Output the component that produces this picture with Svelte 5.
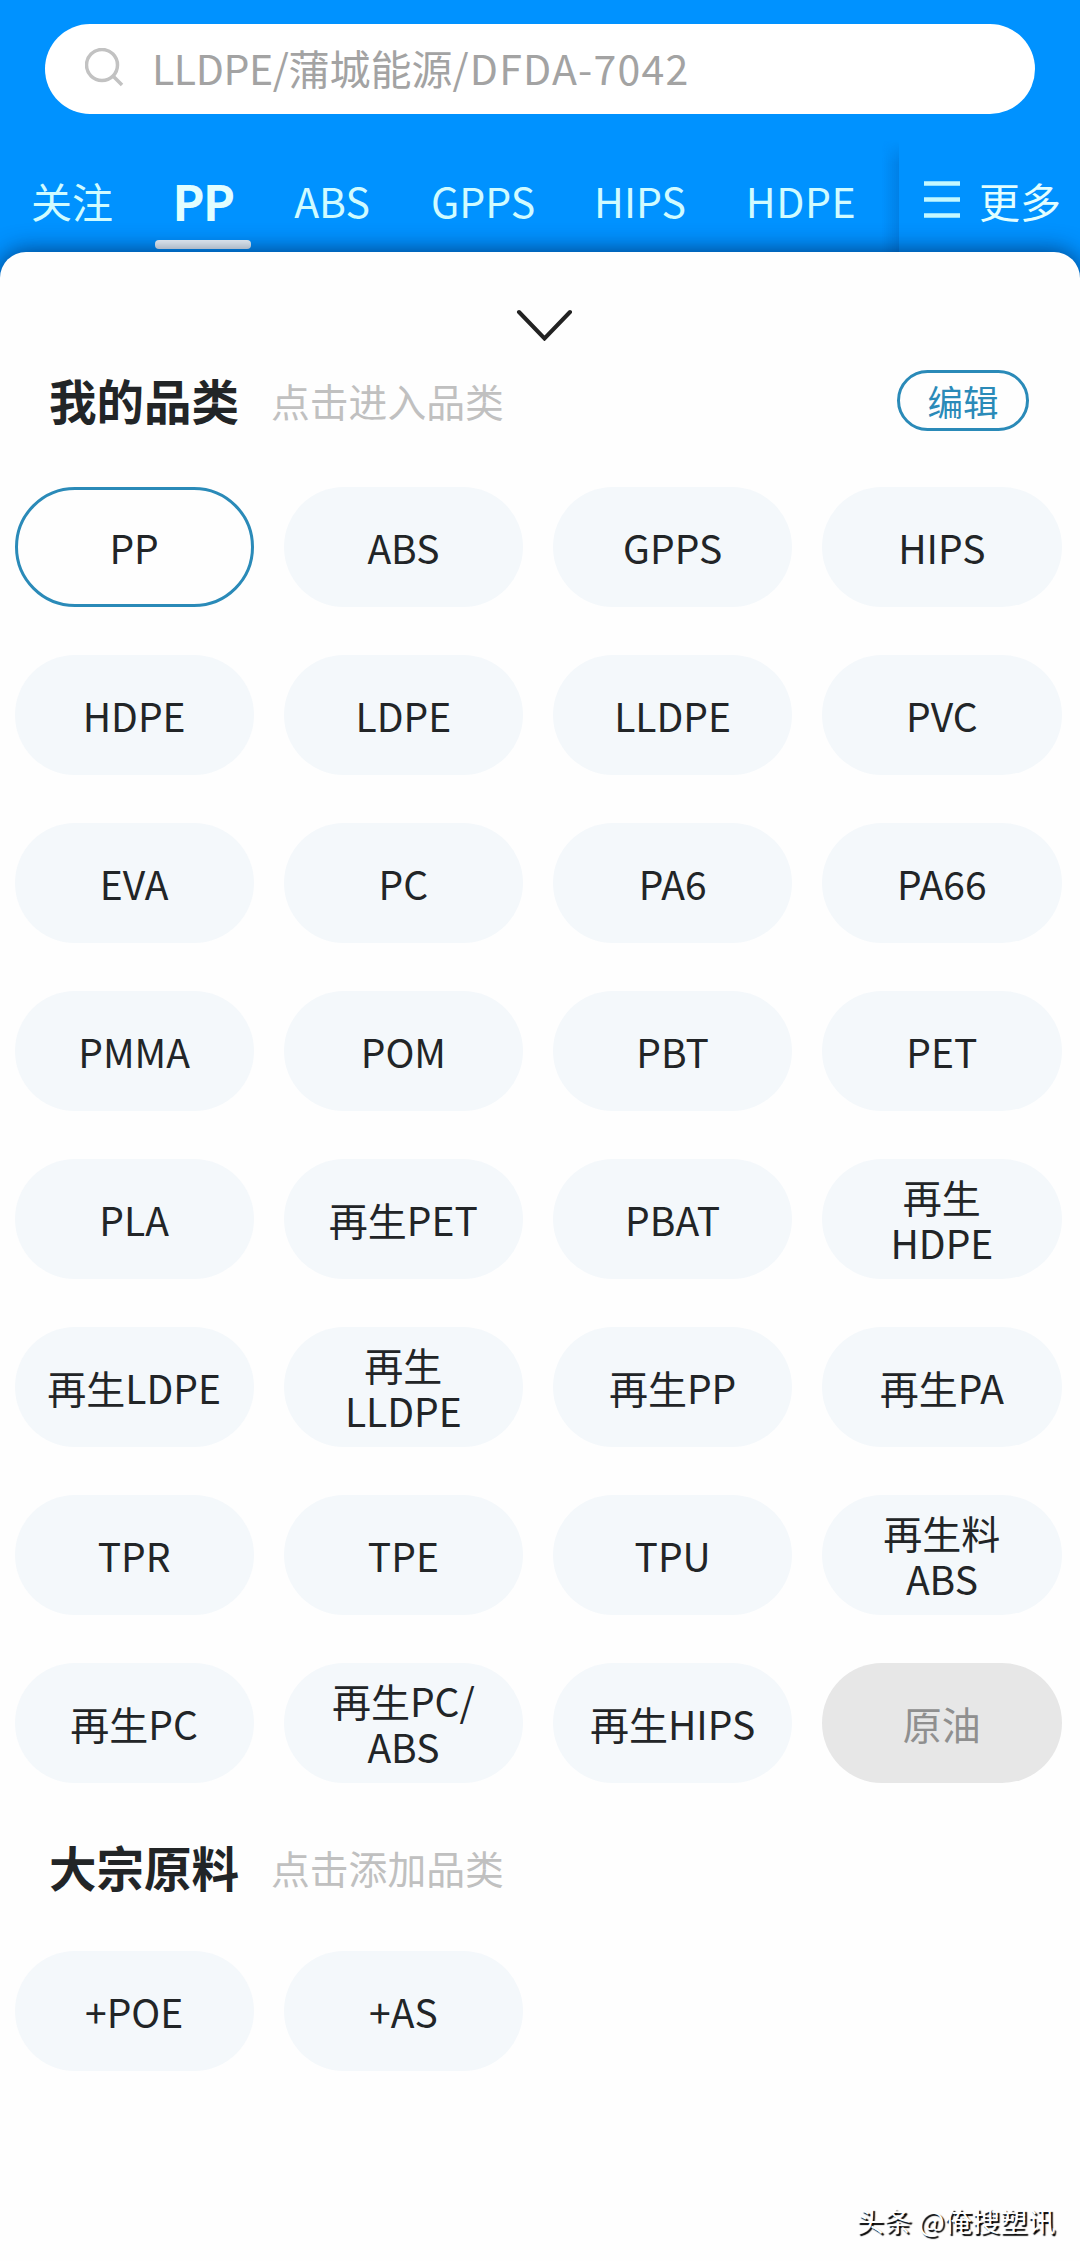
<script lang="ts">
	interface Chip {
		lines: string[];
		state?: "active" | "disabled";
	}

	const tabs = [
		{ label: "关注", key: "follow" },
		{ label: "PP", key: "pp" },
		{ label: "ABS", key: "abs" },
		{ label: "GPPS", key: "gpps" },
		{ label: "HIPS", key: "hips" },
		{ label: "HDPE", key: "hdpe" },
	];

	let activeTab = $state("pp");

	const mine: Chip[] = [
		{ lines: ["PP"], state: "active" },
		{ lines: ["ABS"] },
		{ lines: ["GPPS"] },
		{ lines: ["HIPS"] },
		{ lines: ["HDPE"] },
		{ lines: ["LDPE"] },
		{ lines: ["LLDPE"] },
		{ lines: ["PVC"] },
		{ lines: ["EVA"] },
		{ lines: ["PC"] },
		{ lines: ["PA6"] },
		{ lines: ["PA66"] },
		{ lines: ["PMMA"] },
		{ lines: ["POM"] },
		{ lines: ["PBT"] },
		{ lines: ["PET"] },
		{ lines: ["PLA"] },
		{ lines: ["再生PET"] },
		{ lines: ["PBAT"] },
		{ lines: ["再生", "HDPE"] },
		{ lines: ["再生LDPE"] },
		{ lines: ["再生", "LLDPE"] },
		{ lines: ["再生PP"] },
		{ lines: ["再生PA"] },
		{ lines: ["TPR"] },
		{ lines: ["TPE"] },
		{ lines: ["TPU"] },
		{ lines: ["再生料", "ABS"] },
		{ lines: ["再生PC"] },
		{ lines: ["再生PC/", "ABS"] },
		{ lines: ["再生HIPS"] },
		{ lines: ["原油"], state: "disabled" },
	];

	const bulk: Chip[] = [{ lines: ["+POE"] }, { lines: ["+AS"] }];
</script>

{#snippet chipGrid(chips: Chip[])}
	<div class="grid">
		{#each chips as chip}
			<button class="chip {chip.state ?? ''}" disabled={chip.state === "disabled"}>
				{#each chip.lines as line}
					<span>{line}</span>
				{/each}
			</button>
		{/each}
	</div>
{/snippet}

<div class="page">
	<header>
		<div class="search">
			<svg width="40" height="40" viewBox="0 0 40 40" aria-hidden="true">
				<circle cx="17" cy="17" r="15.5" />
				<path d="M28 28L37 37" />
			</svg>
			<span class="hint"><span class="material">LLDPE/</span>蒲城能源<span class="grade">/DFDA-7042</span></span>
		</div>

		<nav>
			<div class="tabs">
				{#each tabs as tab}
					<button
						class="tab tab-{tab.key}"
						class:selected={activeTab === tab.key}
						onclick={() => (activeTab = tab.key)}
					>
						{tab.label}
					</button>
				{/each}
			</div>
			<div class="divider"></div>
			<button class="more">
				<svg width="36" height="37" viewBox="0 0 36 37" aria-hidden="true">
					<path d="M0 2.5H36M0 18.5H36M0 34.5H36" />
				</svg>
				<span>更多</span>
			</button>
		</nav>
	</header>

	<main>
		<button class="collapse" aria-label="收起">
			<svg width="58" height="32" viewBox="0 0 58 32">
				<path d="M3 3L28.5 29.5L54 3" />
			</svg>
		</button>

		<section>
			<div class="head">
				<h2>我的品类</h2>
				<p>点击进入品类</p>
				<button class="edit">编辑</button>
			</div>
			{@render chipGrid(mine)}
		</section>

		<section class="bulk">
			<div class="head">
				<h2>大宗原料</h2>
				<p>点击添加品类</p>
			</div>
			{@render chipGrid(bulk)}
		</section>

		<footer><span>头条</span><span>@俺搜塑讯</span></footer>
	</main>
</div>

<style>
	:global(body) {
		margin: 0;
		background: #0092ff;
	}

	.page {
		width: 1080px;
		height: 2261px;
		display: flex;
		flex-direction: column;
		overflow: hidden;
		background: #0092ff;
		font-family: "Noto Sans CJK SC", sans-serif;
		color: #222527;
	}

	button {
		margin: 0;
		padding: 0;
		border: 0;
		background: none;
		font: inherit;
		color: inherit;
	}

	svg {
		display: block;
		fill: none;
	}

	/* ===== Header ===== */
	header {
		height: 252px;
		flex: none;
		padding-top: 24px;
		box-sizing: border-box;
	}

	.search {
		height: 90px;
		margin: 0 45px;
		padding: 0 0 3px 40px;
		display: flex;
		align-items: center;
		gap: 27px;
		box-sizing: border-box;
		border-radius: 45px;
		background: #fff;
		font-size: 41px;
		line-height: 60px;
		color: #a3a3a3;
	}

	.search svg {
		stroke: #c2c2c2;
		stroke-width: 3.5;
	}

	.hint {
		margin-top: -2px;
	}

	.material {
		letter-spacing: -0.4px;
	}

	.grade {
		letter-spacing: 1.2px;
	}

	nav {
		height: 138px;
		display: flex;
	}

	.tabs {
		width: 882px;
		padding: 26px 0 0 31px;
		display: flex;
		box-sizing: border-box;
	}

	.tab {
		height: 109px;
		padding-top: 11px;
		display: flex;
		align-items: center;
		justify-content: center;
		box-sizing: border-box;
		white-space: nowrap;
		font-size: 41px;
		line-height: 60px;
		color: #d0fbff;
	}

	.tab-follow {
		width: 82px;
	}

	.tab-pp {
		width: 96px;
		margin-left: 42px;
	}

	.tab-abs {
		width: 84px;
		margin-left: 39px;
	}

	.tab-gpps {
		width: 104px;
		margin-left: 57px;
	}

	.tab-hips {
		width: 94px;
		margin-left: 58px;
	}

	.tab-hdpe {
		width: 112px;
		margin-left: 58px;
		letter-spacing: 0.6px;
	}

	.selected {
		position: relative;
		font-size: 48px;
		font-weight: 700;
		letter-spacing: -1.5px;
		color: #e2feff;
	}

	.selected::after {
		content: "";
		position: absolute;
		left: 0;
		right: 0;
		bottom: 0;
		height: 9px;
		border-radius: 4px;
		background: #f2faff;
	}

	.divider {
		width: 17px;
		margin-top: 26px;
		background: linear-gradient(to right, transparent, rgba(0, 60, 130, 0.2));
		mask-image: linear-gradient(transparent, #000 24px);
	}

	.more {
		height: 109px;
		margin: 26px 0 0 25px;
		padding-top: 11px;
		display: flex;
		align-items: center;
		gap: 19px;
		box-sizing: border-box;
		font-size: 41px;
		line-height: 60px;
		color: #e2feff;
	}

	.more svg {
		margin-bottom: 2px;
		stroke: #c4f8ff;
		stroke-width: 4.5;
	}

	/* ===== Sheet ===== */
	main {
		position: relative;
		flex: 1;
		border-radius: 26px 26px 0 0;
		background: #fefefe;
		box-shadow: 0 0 24px rgba(0, 20, 60, 0.7);
	}

	.collapse {
		display: block;
		margin: 0 auto;
		padding: 57px 0 0 9px;
	}

	.collapse svg {
		stroke: #222;
		stroke-width: 4;
		stroke-linecap: round;
	}

	.head {
		height: 62px;
		padding: 0 51px 0 49px;
		display: flex;
		align-items: center;
	}

	section:not(.bulk) .head {
		margin: 28px 0 56px;
	}

	.bulk .head {
		margin: 53px 0 53px;
	}

	h2 {
		margin: 0;
		font-size: 47.5px;
		line-height: 62px;
		font-weight: 700;
	}

	p {
		margin: 0 0 0 32px;
		font-size: 38.8px;
		line-height: 62px;
		color: #c0c0c0;
	}

	.edit {
		width: 132px;
		height: 61px;
		margin-left: auto;
		border: 3px solid #2a8ab8;
		border-radius: 31px;
		font-size: 35.5px;
		line-height: 55px;
		color: #2a8ab8;
	}

	/* ===== Chips ===== */
	.grid {
		padding: 0 18.5px 0 14.5px;
		display: grid;
		grid-template-columns: repeat(4, 1fr);
		gap: 48px 30px;
	}

	.chip {
		height: 120px;
		display: flex;
		flex-direction: column;
		align-items: center;
		justify-content: center;
		box-sizing: border-box;
		border-radius: 60px;
		background: #f4f8fb;
		font-size: 39px;
		line-height: 46px;
	}

	.active {
		border: 3px solid #2a8ab8;
		background: #fefefe;
	}

	.disabled {
		background: #e7e7e7;
		color: #8f8f8f;
	}

	/* ===== Watermark ===== */
	footer {
		position: absolute;
		right: 25px;
		bottom: 21px;
		display: flex;
		gap: 7px;
		font-size: 27.6px;
		line-height: 40px;
		color: #fff;
		text-shadow: 2px 2px 1px #000;
	}
</style>
